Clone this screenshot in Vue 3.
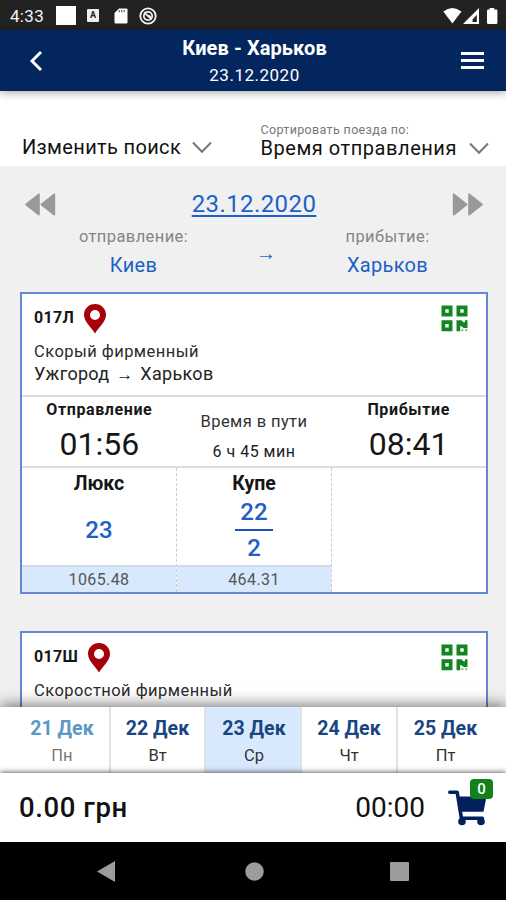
<script setup>
const trains = [
  {
    number: '017Л',
    kind: 'Скорый фирменный',
    from: 'Ужгород',
    to: 'Харьков',
    departure: '01:56',
    arrival: '08:41',
    duration: '6 ч 45 мин',
    seats: [
      { name: 'Люкс', top: '23', price: '1065.48' },
      { name: 'Купе', top: '22', bottom: '2', price: '464.31' },
    ],
  },
  { number: '017Ш', kind: 'Скоростной фирменный', seats: [] },
]

const days = [
  { date: '21 Дек', day: 'Пн', past: true },
  { date: '22 Дек', day: 'Вт' },
  { date: '23 Дек', day: 'Ср', active: true },
  { date: '24 Дек', day: 'Чт' },
  { date: '25 Дек', day: 'Пт' },
]
</script>

<template>
  <div class="screen">
    <div class="status">
      <span class="clock">4:33</span>
      <span class="square"></span>
      <span class="lang">A</span>
      <svg class="sd" width="14" height="16" viewBox="0 0 14 16">
        <path d="M5 0.5h7.4q1.1 0 1.1 1.1v12.8q0 1.1-1.1 1.1H1.6q-1.1 0-1.1-1.1V5z" fill="#fff" />
        <path d="M5.2 2v2.2M7.7 2v2.2M10.2 2v2.2" stroke="#555" stroke-width="1.1" />
      </svg>
      <svg class="sync" width="18" height="18" viewBox="0 0 18 18" fill="none" stroke="#f4f4f4">
        <circle cx="9" cy="9" r="7.7" stroke-width="1.8" />
        <circle cx="9" cy="9" r="4.2" stroke-width="1.7" />
        <path d="M5 5.4l7.6 7M9.4 8.2l2.6 2.6" stroke-width="1.7" />
      </svg>
      <span class="grow"></span>
      <svg width="56" height="18" viewBox="0 0 56 18">
        <path d="M0.3 4.6Q9.3-2.8 18.5 4.6L9.4 16.4z" fill="#fff" />
        <path d="M36 1v16H20z" fill="#fff" />
        <path d="M33.8 7.800v7.200h-4.200v-2.600z" fill="#222" />
        <path d="M46.6 1h4.6v1.6h2q1.2 0 1.2 1.2v12q0 1.2-1.2 1.2h-8q-1.2 0-1.2-1.2v-12q0-1.2 1.2-1.2h1.4z" fill="#fff" />
      </svg>
    </div>

    <header class="header">
      <svg class="back" width="14" height="22" viewBox="0 0 14 22">
        <path d="M12 2L3 11l9 9" fill="none" stroke="#fff" stroke-width="2.9" />
      </svg>
      <div class="heading">
        <div class="title">Киев - Харьков</div>
        <div class="subtitle">23.12.2020</div>
      </div>
      <div class="burger"><i></i><i></i><i></i></div>
    </header>

    <div class="filters">
      <div class="change">
        <span>Изменить поиск</span>
        <svg width="20" height="13" viewBox="0 0 20 13"><path d="M1 1.5l9 9.2 9-9.2" fill="none" stroke="#777" stroke-width="2" /></svg>
      </div>
      <div class="sort">
        <div class="sort-label">Сортировать поезда по:</div>
        <div class="sort-row">
          <span>Время отправления</span>
          <svg width="20" height="13" viewBox="0 0 20 13"><path d="M1 1.5l9 9.2 9-9.2" fill="none" stroke="#777" stroke-width="2" /></svg>
        </div>
      </div>
    </div>

    <main class="content">
      <div class="datebar">
        <svg width="31" height="23" viewBox="0 0 31 23" fill="#999" stroke="#999" stroke-width="1.6" stroke-linejoin="round">
          <path d="M14 1.2v20.6L1 11.5zM29.4 1.2v20.6L16.4 11.5z" />
        </svg>
        <span class="date">23.12.2020</span>
        <svg width="31" height="23" viewBox="0 0 31 23" fill="#999" stroke="#999" stroke-width="1.6" stroke-linejoin="round">
          <path d="M1.6 1.2v20.6l13-10.3zM17 1.2v20.6l13-10.3z" />
        </svg>
      </div>
      <div class="route">
        <div class="place">
          <div class="caption">отправление:</div>
          <div class="city">Киев</div>
        </div>
        <div class="route-arrow">→</div>
        <div class="place">
          <div class="caption">прибытие:</div>
          <div class="city">Харьков</div>
        </div>
      </div>

      <section v-for="t in trains" :key="t.number" class="card">
        <div class="info">
          <div class="top">
            <span class="number">{{ t.number }}</span>
            <svg class="pin" width="22" height="30" viewBox="0 0 22 30">
              <path fill-rule="evenodd" fill="#a60008" d="M11 0C4.8 0 0 4.8 0 10.8 0 18 7 22.500 11 29.600 15 22.500 22 18 22 10.800 22 4.800 17.200 0 11 0zM11 6a5 5 0 1 1 0 10 5 5 0 0 1 0-10z" />
            </svg>
            <span class="grow"></span>
            <svg class="qr" width="27" height="27" viewBox="0 0 27 27">
              <path fill="none" stroke="#11851f" stroke-width="3.8" d="M2.400 2.400h7.200v7.200h-7.200zM17.400 2.400h7.200v7.200h-7.200zM2.400 17.200h7.200v7.200h-7.200z" />
              <path fill="#11851f" d="M15.500 15.300h5l2 2h1.500v-2h2.500v7.600h-3.800l-2.700-2h-.8v5.400h-3.700z" />
              <path fill="#8bbd8f" d="M20.400 24h2v2.300h-2zM24.200 24h2v2.300h-2z" />
            </svg>
          </div>
          <div class="kind">{{ t.kind }}</div>
          <div v-if="t.from" class="path">{{ t.from }} <span class="arrow">→</span> {{ t.to }}</div>
        </div>
        <div v-if="t.departure" class="times">
          <div class="point">
            <div class="label">Отправление</div>
            <div class="time">{{ t.departure }}</div>
          </div>
          <div class="travel">
            <div class="travel-label">Время в пути</div>
            <div class="duration">{{ t.duration }}</div>
          </div>
          <div class="point">
            <div class="label">Прибытие</div>
            <div class="time">{{ t.arrival }}</div>
          </div>
        </div>
        <div v-if="t.seats.length" class="seats">
          <div v-for="s in t.seats" :key="s.name" class="seat">
            <div class="seat-name">{{ s.name }}</div>
            <div class="count">
              <span>{{ s.top }}</span>
              <template v-if="s.bottom"><i class="bar"></i><span>{{ s.bottom }}</span></template>
            </div>
            <div class="price">{{ s.price }}</div>
          </div>
        </div>
      </section>
    </main>

    <nav class="days">
      <div v-for="d in days" :key="d.date" class="day" :class="{ past: d.past, active: d.active }">
        <div class="day-date">{{ d.date }}</div>
        <div class="day-name">{{ d.day }}</div>
      </div>
    </nav>

    <div class="total">
      <span class="sum">0.00 грн</span>
      <span class="timer">00:00</span>
      <div class="cart">
        <svg width="39" height="36" viewBox="0 0 39 36">
          <path d="M1.800 2.300h7.400l4.200 26h21" fill="none" stroke="#04205c" stroke-width="3.600" stroke-linecap="round" stroke-linejoin="round" />
          <path d="M9.500 6.500h29l-3 15.200H13z" fill="#04205c" />
          <circle cx="14" cy="31.500" r="3.800" fill="#04205c" />
          <circle cx="33" cy="31.500" r="3.800" fill="#04205c" />
        </svg>
        <span class="badge">0</span>
      </div>
    </div>

    <div class="system">
      <svg width="18" height="21" viewBox="0 0 18 21"><path d="M18 0v21L0 10.500z" fill="#9c9c9c" /></svg>
      <svg class="home" width="19" height="19" viewBox="0 0 19 19"><circle cx="9.500" cy="9.500" r="9.300" fill="#9c9c9c" /></svg>
      <svg width="19" height="19" viewBox="0 0 19 19"><rect width="19" height="19" rx="1" fill="#9c9c9c" /></svg>
    </div>
  </div>
</template>

<style>
body { margin: 0; overflow: hidden; }
</style>

<style scoped>
* { box-sizing: border-box; }
.screen {
  width: 506px; height: 900px; display: flex; flex-direction: column; overflow: hidden;
  background: #f0f0f0; color: #161616; white-space: nowrap;
  font-family: Roboto, "Liberation Sans", sans-serif;
}
.grow { flex: 1; }
svg { display: block; flex: none; }

.status { height: 30px; flex: none; background: #222; display: flex; align-items: center; padding: 1px 7px 0 10px; color: #f2f2f2; }
.clock { font-size: 17px; width: 46px; line-height: 30px; letter-spacing: .3px; }
.square { width: 20px; height: 19px; background: #fff; margin-right: 11px; }
.lang { width: 12px; height: 13px; border-radius: 1px; background: #eee; color: #222; font: 700 9px/13px Roboto, sans-serif; text-align: center; margin-right: 15px; }
.sync { margin-left: 11px; }

.header { height: 61px; flex: none; background: #04265f; color: #fff; display: flex; align-items: center; padding: 0 22px 0 29px; position: relative; z-index: 2; box-shadow: 0 1px 9px rgba(0, 0, 0, .4); }
.heading { flex: 1; text-align: center; padding-left: 5px; }
.title { font-weight: 700; font-size: 20px; line-height: 28px; letter-spacing: .1px; }
.subtitle { font-size: 17px; line-height: 26px; letter-spacing: .5px; }
.burger { width: 23px; display: flex; flex-direction: column; gap: 4px; }
.burger i { height: 3px; background: #fff; }

.filters { height: 75px; flex: none; background: #fff; padding: 32px 17px 0 22px; display: flex; justify-content: space-between; }
.change, .sort-row { display: flex; align-items: center; font-size: 20px; letter-spacing: .55px; color: #111; }
.change { height: 48px; gap: 11px; align-self: flex-start; letter-spacing: .35px; }
.sort-label { font-size: 12.500px; line-height: 14px; letter-spacing: .35px; color: #777; }
.sort-row { height: 22px; gap: 12px; }

.content { flex: 1; min-height: 0; overflow: hidden; padding: 0 18px 0 20px; }
.datebar { height: 48px; margin-top: 14px; display: flex; justify-content: space-between; align-items: flex-start; padding: 13px 5px 0 5px; }
.date { color: #1d60c8; font-size: 24px; line-height: 28px; margin-top: -3px; letter-spacing: .4px; text-decoration: underline; text-decoration-thickness: 1.500px; text-underline-offset: 3px; }
.route { height: 64px; display: flex; justify-content: space-between; padding: 0 34px 0 47px; }
.place { width: 133px; text-align: center; }
.caption { color: #858585; font-size: 16.500px; line-height: 20px; letter-spacing: .4px; margin-top: -1px; }
.city { color: #1d60c8; font-size: 20px; line-height: 28px; letter-spacing: .3px; margin-top: 4px; }
.route-arrow { color: #1d60c8; font: 20px/20px "Liberation Sans", sans-serif; margin: 15px 0 0 11px; }

.card { background: #fff; border: 2px solid #6687d3; height: 302px; margin-bottom: 37px; }
.info { height: 101px; padding: 0 18px 0 12px; }
.top { display: flex; height: 48px; padding-top: 10px; }
.number { font-weight: 700; font-size: 16px; line-height: 28px; letter-spacing: .3px; margin-right: 10px; }
.qr { margin-top: 1px; }
.kind { font-size: 16.500px; line-height: 20px; letter-spacing: .45px; color: #2b2b2b; }
.path { font-size: 18px; line-height: 22px; letter-spacing: .3px; color: #222; margin-top: 1px; }
.arrow { font: 17px/14px "Liberation Sans", sans-serif; margin: 0 2px; }
.times { height: 73px; border: solid #dcdcdc; border-width: 2px 0; display: grid; grid-template-columns: 1fr 1fr 1fr; text-align: center; }
.label { font-weight: 700; font-size: 16px; line-height: 20px; letter-spacing: .6px; margin-top: 3px; }
.time { font-size: 32px; line-height: 38px; margin-top: 5px; }
.travel-label { font-size: 16.500px; line-height: 20px; letter-spacing: .4px; margin-top: 15px; color: #333; }
.duration { font-size: 16px; line-height: 20px; letter-spacing: .5px; margin-top: 10px; color: #222; }
.seats { display: flex; height: 124px; }
.seat { width: 155px; border-right: 1px dashed #ccc; display: flex; flex-direction: column; text-align: center; }
.seat-name { font-weight: 700; font-size: 19.500px; line-height: 24px; padding-top: 4px; height: 27px; }
.count { flex: 1; display: flex; flex-direction: column; align-items: center; justify-content: center; color: #1d60c8; font-weight: 500; font-size: 24px; line-height: 34px; }
.bar { width: 38px; height: 2px; background: #1d4fc4; }
.price { height: 27px; background: #d8e9fe; border-top: 2px solid #d3dce6; font-size: 16px; line-height: 25px; letter-spacing: .4px; color: #555; }

.days { height: 66px; flex: none; position: relative; z-index: 2; display: grid; grid-template-columns: 111px 95px 96px 96px 1fr; background: #fff; box-shadow: 0 -2px 14px rgba(0, 0, 0, .55); }
.day { text-align: center; border-right: 2px solid #e2e2e2; }
.day:first-child { padding-left: 15px; }
.day:last-child { border-right: 0; padding-right: 13px; }
.day-date { font-weight: 700; font-size: 19.500px; line-height: 24px; margin-top: 10px; color: #194683; }
.day-name { font-size: 16.500px; line-height: 20px; margin-top: 5px; color: #333; }
.active { background: #d8e9fe; padding-left: 2px; }
.past .day-date { color: #5c98c6; }
.past .day-name { color: #777; }

.total { height: 69px; flex: none; background: #fff; position: relative; z-index: 3; display: flex; align-items: center; padding: 0 13px 0 19px; box-shadow: 0 -1px 5px rgba(0, 0, 0, .6); color: #111; }
.sum { flex: 1; font-weight: 500; font-size: 27.500px; letter-spacing: .6px; }
.timer { font-size: 28px; margin-right: 23px; }
.cart { position: relative; width: 45px; height: 36px; }
.badge { position: absolute; right: 0; top: -11px; width: 23px; height: 20px; border-radius: 4px; background: #12801d; color: #fff; font-size: 15px; font-weight: 500; line-height: 20px; text-align: center; }

.system { height: 58px; flex: none; background: #000; position: relative; z-index: 4; display: flex; align-items: center; justify-content: space-between; padding: 0 97px; }
.home { margin-left: 3px; }
</style>
